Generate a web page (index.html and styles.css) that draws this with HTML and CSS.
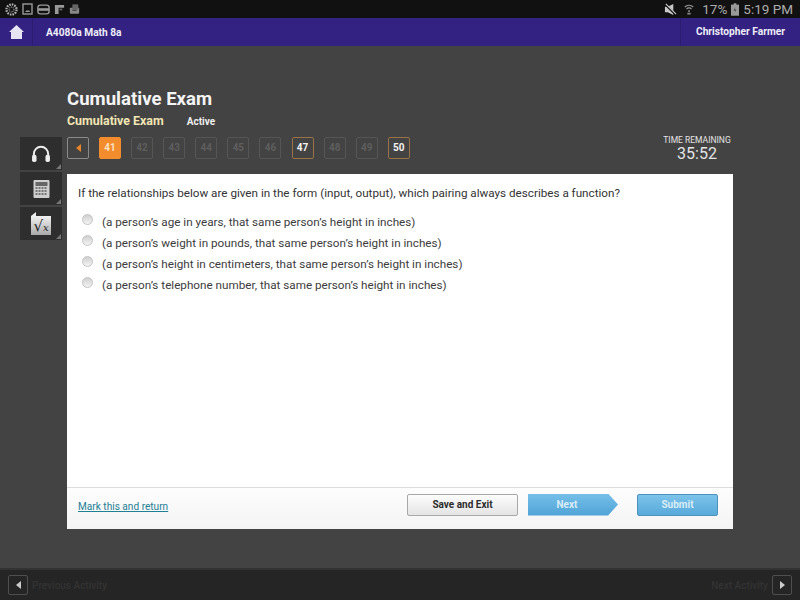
FILE: index.html
```html
<!DOCTYPE html>
<html lang="en">
<head>
<meta charset="utf-8">
<title>Cumulative Exam</title>
<link rel="stylesheet" href="styles.css">
</head>
<body>
<div class="statusbar">
  <div class="status-left">
    <svg class="si" width="13" height="13" viewBox="0 0 16 16"><circle cx="8" cy="8" r="6.200" fill="none" stroke="#b0b0b0" stroke-width="2.800" stroke-dasharray="2 1.200"/><circle cx="8" cy="8" r="3" fill="none" stroke="#999" stroke-width="1.400" stroke-dasharray="1.200 1"/></svg>
    <svg class="si" width="11" height="12" viewBox="0 0 11 12"><rect x="1" y="1" width="9" height="10" fill="none" stroke="#999" stroke-width="1.400"/><path d="M3 9l2-2 1 1 1-1 1 2z" fill="#999"/></svg>
    <svg class="si" width="13" height="11" viewBox="0 0 15 12"><rect x="1" y="1" width="13" height="10" rx="3" fill="none" stroke="#999" stroke-width="1.600"/><rect x="1" y="4.500" width="13" height="3" fill="#999"/></svg>
    <svg class="si" width="11" height="11" viewBox="0 0 12 12"><path d="M1 1h10v3H5v7H1z" fill="#999"/><path d="M6 5h3v2H6z" fill="#666"/></svg>
    <svg class="si" width="11" height="12" viewBox="0 0 13 13"><rect x="1" y="5" width="11" height="7" rx="1" fill="#888"/><rect x="4" y="1" width="7" height="6" fill="#666"/><path d="M4 8h5" stroke="#222" stroke-width="1"/></svg>
  </div>
  <div class="status-right">
    <svg class="mute" width="13" height="13" viewBox="0 0 14 14"><path d="M1 4h3l6-3v12l-6-3H1z" fill="#c8c8c8"/><path d="M1 1l12 12" stroke="#111" stroke-width="2.400"/><path d="M2 1l11 11" stroke="#ccc" stroke-width="1.200"/></svg>
    <svg class="wifi" width="10" height="13" viewBox="0 0 12 14"><path d="M1 4a7 7 0 0 1 10 0M3 6.500a4 4 0 0 1 6 0" fill="none" stroke="#999" stroke-width="1.400"/><path d="M5 8h2v2H5zM4 11h4v2H4z" fill="#888"/></svg>
    <span class="pct">17%</span>
    <svg class="batt" width="8" height="13" viewBox="0 0 9 14"><rect x="3" y="0" width="3" height="2" fill="#999"/><rect x="0" y="1.500" width="9" height="12.500" fill="#999"/><path d="M5 4L3 8h2l-1 3 2-4H4z" fill="#333"/></svg>
    <span class="clock">5:19 PM</span>
  </div>
</div>

<header class="topbar">
  <div class="home">
    <svg width="15" height="15" viewBox="0 0 15 15"><path d="M7.500 0L15 7H13V14H2V7H0z" fill="#e6e4f2"/></svg>
  </div>
  <div class="course">A4080a Math 8a</div>
  <div class="user">Christopher Farmer</div>
</header>

<main class="stage">
  <div class="tools">
    <div class="tool">
      <svg width="20" height="17" viewBox="0 0 22 19"><path d="M3 13V10a8 8 0 0 1 16 0v3" fill="none" stroke="#eee" stroke-width="2.200"/><rect x="1" y="11" width="5" height="8" rx="2" fill="#eee"/><rect x="16" y="11" width="5" height="8" rx="2" fill="#eee"/></svg>
    </div>
    <div class="tool">
      <svg width="17" height="18" viewBox="0 0 16 18"><rect width="16" height="18" rx="1" fill="#cfcfcf"/><rect x="2" y="2" width="12" height="4" fill="#666"/><path d="M2 8h12M2 11h12M2 14h12" stroke="#777" stroke-width="2" stroke-dasharray="2 1"/></svg>
    </div>
    <div class="tool">
      <div class="formula"><span class="radical">√</span><i class="var">x</i></div>
    </div>
  </div>

  <div class="content">
    <h1 class="title">Cumulative Exam</h1>
    <div class="subline"><span class="subtitle">Cumulative Exam</span><span class="state">Active</span></div>
    <div class="navrow">
      <div class="back"><span class="back-arrow"></span></div>
      <div class="qnums">
        <span class="q current">41</span>
        <span class="q">42</span>
        <span class="q">43</span>
        <span class="q">44</span>
        <span class="q">45</span>
        <span class="q">46</span>
        <span class="q marked">47</span>
        <span class="q">48</span>
        <span class="q">49</span>
        <span class="q marked">50</span>
      </div>
      <div class="timer">
        <div class="timer-label">TIME REMAINING</div>
        <div class="timer-value">35:52</div>
      </div>
    </div>

    <section class="card">
      <div class="card-body">
        <p class="question">If the relationships below are given in the form (input, output), which pairing always describes a function?</p>
        <ul class="options">
          <li class="option"><span class="radio"></span><span>(a person’s age in years, that same person’s height in inches)</span></li>
          <li class="option"><span class="radio"></span><span>(a person’s weight in pounds, that same person’s height in inches)</span></li>
          <li class="option"><span class="radio"></span><span>(a person’s height in centimeters, that same person’s height in inches)</span></li>
          <li class="option"><span class="radio"></span><span>(a person’s telephone number, that same person’s height in inches)</span></li>
        </ul>
      </div>
      <div class="card-foot">
        <a class="mark" href="#">Mark this and return</a>
        <div class="actions">
          <button class="btn save">Save and Exit</button>
          <button class="btn next">Next</button>
          <button class="btn submit">Submit</button>
        </div>
      </div>
    </section>
  </div>
</main>

<footer class="bottombar">
  <div class="activity">
    <span class="act-btn"><span class="tri-left"></span></span>
    <span class="act-text">Previous Activity</span>
  </div>
  <div class="activity">
    <span class="act-text">Next Activity</span>
    <span class="act-btn"><span class="tri-right"></span></span>
  </div>
</footer>
</body>
</html>
```

FILE: styles.css
```css
* { box-sizing: border-box; }
html, body { margin: 0; padding: 0; }
body {
  width: 800px;
  height: 600px;
  overflow: hidden;
  display: flex;
  flex-direction: column;
  background: #434343;
  font-family: Roboto, "Liberation Sans", sans-serif;
}

.statusbar {
  height: 18px;
  flex: none;
  background: #111;
  display: flex;
  justify-content: space-between;
  align-items: center;
  padding: 0 7px 0 5px;
}
.status-left { display: flex; align-items: center; gap: 4px; }
.status-right { display: flex; align-items: center; color: #acacac; font-size: 13.500px; }
.mute { margin-right: 7px; }
.wifi { margin-right: 8px; }
.pct { margin-right: 4px; }
.batt { margin-right: 4px; }

.topbar {
  height: 28px;
  flex: none;
  background: #332282;
  display: flex;
  align-items: center;
  color: #eeecf8;
  font-size: 10.200px;
  font-weight: 700;
}
.home {
  width: 33px;
  height: 100%;
  padding-left: 9px;
  display: flex;
  align-items: center;
  border-right: 1px solid #2c1d72;
}
.course { margin-left: 13px; flex: 1; }
.user {
  width: 120px;
  height: 100%;
  line-height: 28px;
  padding-left: 15px;
  border-left: 1px solid #2c1d72;
}

.stage {
  flex: 1;
  display: flex;
  padding: 0 67px 0 20px;
  min-height: 0;
}
.tools {
  width: 42px;
  flex: none;
  margin-top: 91px;
  margin-right: 5px;
  display: flex;
  flex-direction: column;
  gap: 2px;
}
.tool {
  height: 33px;
  background: #2e2e2e;
  display: flex;
  align-items: center;
  justify-content: center;
  position: relative;
}
.tool::after {
  content: "";
  position: absolute;
  right: 1px;
  bottom: 1px;
  border-style: solid;
  border-width: 0 0 5px 5px;
  border-color: transparent transparent #777 transparent;
}
.formula {
  width: 20px;
  height: 19px;
  margin-top: 3px;
  background: linear-gradient(#f2f2f2, #a9a9a9);
  color: #222;
  font-family: "DejaVu Serif", serif;
  line-height: 19px;
  text-align: center;
  white-space: nowrap;
  position: relative;
}
.formula::before {
  content: "";
  position: absolute;
  left: 0;
  top: -4px;
  border-style: solid;
  border-width: 0 0 4px 5px;
  border-color: transparent transparent #eee transparent;
}
.radical { font-family: "DejaVu Sans", sans-serif; font-size: 15px; }
.var { font-size: 10px; }

.content { flex: 1; display: flex; flex-direction: column; min-width: 0; }
.title {
  margin: 41px 0 0;
  font-size: 18.600px;
  line-height: 24px;
  font-weight: 700;
  color: #f4f4f4;
}
.subline { display: flex; align-items: baseline; height: 20px; line-height: 20px; }
.subtitle { font-size: 12.400px; font-weight: 700; color: #f2e6b4; }
.state { margin-left: 23px; font-size: 10px; font-weight: 700; color: #efefef; }

.navrow { display: flex; align-items: flex-start; height: 37px; margin-top: 6px; }
.back {
  width: 22px;
  height: 22px;
  border: 1px solid #8a8a8a;
  border-radius: 2px;
  display: flex;
  align-items: center;
  justify-content: center;
  margin-right: 10px;
}
.back-arrow {
  border-style: solid;
  border-width: 4px 5px 4px 0;
  border-color: transparent #e8842a transparent transparent;
}
.qnums { display: flex; gap: 10.100px; flex: 1; }
.q {
  width: 22px;
  height: 22px;
  border: 1px solid #555;
  border-radius: 2px;
  font-size: 10px;
  font-weight: 700;
  line-height: 20px;
  text-align: center;
  color: #5e5e5e;
}
.q.current { background: #f28c2c; border-color: #f28c2c; color: #ffe2c0; }
.q.marked { border-color: #9a7248; color: #f2f2f2; }
.timer { width: 70px; margin-right: 1px; color: #e4e4e4; text-align: center; }
.timer-label { font-size: 8.500px; line-height: 9px; white-space: nowrap; margin-top: -1px; }
.timer-value { font-size: 16px; line-height: 17px; }

.card {
  height: 355px;
  background: #fff;
  display: flex;
  flex-direction: column;
}
.card-body { flex: 1; padding: 12px 11px 0; }
.question { margin: 0; font-size: 11.680px; line-height: 14px; color: #333; }
.options { list-style: none; margin: 11px 0 0; padding: 0 0 0 4px; }
.option {
  display: flex;
  align-items: center;
  height: 21px;
  font-size: 11.700px;
  color: #3c3c3c;
}
.radio {
  width: 11px;
  height: 11px;
  border-radius: 50%;
  margin: -4px 9px 0 0;
  border: 1px solid #c4c4c4;
  background: linear-gradient(#cfcfcf, #f4f4f4);
  flex: none;
}
.card-foot {
  height: 42px;
  flex: none;
  border-top: 1px solid #dcdcdc;
  background: linear-gradient(#fdfdfd, #f4f4f4);
  display: flex;
  align-items: center;
  justify-content: space-between;
  padding: 0 15px 0 11px;
}
.mark { color: #1f7f95; font-size: 10.100px; margin-bottom: 4px; }
.actions { display: flex; align-items: center; gap: 10px; margin-bottom: 8px; }
.btn {
  height: 22px;
  padding: 0;
  font-family: inherit;
  font-size: 10px;
  font-weight: 700;
}
.save {
  width: 111px;
  border: 1px solid #a8a8a8;
  border-radius: 2px;
  color: #2c2c2c;
  background: linear-gradient(#fdfdfd, #e4e4e4);
}
.next {
  width: 90px;
  border: 0;
  color: #d8edf8;
  background: linear-gradient(#76bfe9, #4fa3d6);
  clip-path: polygon(0 0, 89% 0, 100% 50%, 89% 100%, 0 100%);
  padding-right: 12px;
  margin-right: 9px;
}
.submit {
  width: 81px;
  border: 1px solid #4c92bd;
  border-radius: 2px;
  color: #d8edf8;
  background: linear-gradient(#7cc3ea, #58a9da);
}

.bottombar {
  height: 32px;
  flex: none;
  background: #252525;
  border-top: 2px solid #333;
  display: flex;
  align-items: center;
  justify-content: space-between;
  padding: 0 8px;
}
.activity { display: flex; align-items: center; gap: 4px; }
.act-btn {
  width: 20px;
  height: 20px;
  border: 1px solid #4e4e4e;
  border-radius: 2px;
  display: flex;
  align-items: center;
  justify-content: center;
}
.act-text { font-size: 10px; font-weight: 500; color: #333; }
.tri-left, .tri-right { border-style: solid; border-color: transparent; }
.tri-left { border-width: 4px 5px 4px 0; border-right-color: #ccc; }
.tri-right { border-width: 4px 0 4px 5px; border-left-color: #ccc; }
```
